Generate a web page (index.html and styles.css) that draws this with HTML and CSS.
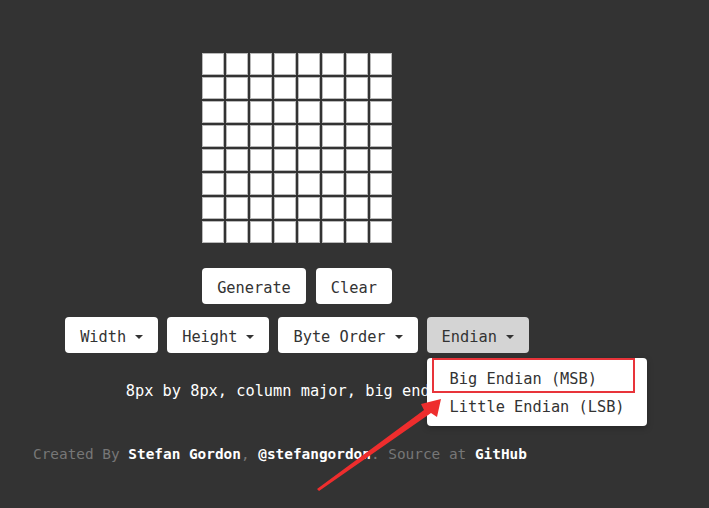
FILE: index.html
```html
<!DOCTYPE html>
<html lang="en">
<head>
<meta charset="utf-8">
<title>Bitmap Generator</title>
<link rel="stylesheet" href="styles.css">
</head>
<body>
<div class="page">
  <div class="grid">
    <span class="cell"></span><span class="cell"></span><span class="cell"></span><span class="cell"></span><span class="cell"></span><span class="cell"></span><span class="cell"></span><span class="cell"></span>
    <span class="cell"></span><span class="cell"></span><span class="cell"></span><span class="cell"></span><span class="cell"></span><span class="cell"></span><span class="cell"></span><span class="cell"></span>
    <span class="cell"></span><span class="cell"></span><span class="cell"></span><span class="cell"></span><span class="cell"></span><span class="cell"></span><span class="cell"></span><span class="cell"></span>
    <span class="cell"></span><span class="cell"></span><span class="cell"></span><span class="cell"></span><span class="cell"></span><span class="cell"></span><span class="cell"></span><span class="cell"></span>
    <span class="cell"></span><span class="cell"></span><span class="cell"></span><span class="cell"></span><span class="cell"></span><span class="cell"></span><span class="cell"></span><span class="cell"></span>
    <span class="cell"></span><span class="cell"></span><span class="cell"></span><span class="cell"></span><span class="cell"></span><span class="cell"></span><span class="cell"></span><span class="cell"></span>
    <span class="cell"></span><span class="cell"></span><span class="cell"></span><span class="cell"></span><span class="cell"></span><span class="cell"></span><span class="cell"></span><span class="cell"></span>
    <span class="cell"></span><span class="cell"></span><span class="cell"></span><span class="cell"></span><span class="cell"></span><span class="cell"></span><span class="cell"></span><span class="cell"></span>
  </div>

  <div class="row row-actions">
    <button class="btn">Generate</button>
    <button class="btn">Clear</button>
  </div>

  <div class="row row-options">
    <button class="btn">Width<span class="caret"></span></button>
    <button class="btn">Height<span class="caret"></span></button>
    <button class="btn">Byte Order<span class="caret"></span></button>
    <div class="dropdown">
      <button class="btn btn-active">Endian<span class="caret"></span></button>
      <ul class="menu">
        <li class="menu-item">Big Endian (MSB)</li>
        <li class="menu-item">Little Endian (LSB)</li>
        <span class="highlight"></span>
      </ul>
    </div>
  </div>

  <p class="status">8px by 8px, column major, big endian</p>
</div>

<p class="footer">Created By <a class="link">Stefan Gordon</a>, <a class="link">@stefangordon</a>. Source at <a class="link">GitHub</a></p>

<svg class="arrow" width="709" height="508" viewBox="0 0 709 508">
  <polygon points="317,489 424,410 421,404 441,399 437,417 431,413 319,491" fill="#ee2d2d"/>
</svg>
</body>
</html>
```

FILE: styles.css
```css
* {
  box-sizing: border-box;
}

html, body {
  margin: 0;
  padding: 0;
}

body {
  background: #333333;
  width: 709px;
  height: 508px;
  overflow: hidden;
  position: relative;
  font-family: "DejaVu Sans Mono", "Liberation Mono", monospace;
  font-size: 15.3px;
  color: #ffffff;
}

.page {
  width: 594px;
  padding-top: 52px;
  display: flex;
  flex-direction: column;
  align-items: center;
}

.grid {
  display: grid;
  grid-template-columns: repeat(8, 22px);
  grid-auto-rows: 22px;
  gap: 2px;
  padding: 1px;
}

.cell {
  display: block;
  background: #ffffff;
  border: 1px solid #b9b9b9;
}

.row {
  display: flex;
  justify-content: center;
}

.row-actions {
  margin-top: 24px;
  gap: 10px;
}

.row-options {
  margin-top: 13px;
  gap: 9px;
}

.btn {
  display: flex;
  align-items: center;
  height: 36px;
  padding: 3px 15px 0;
  border: none;
  border-radius: 4px;
  background: #ffffff;
  color: #333333;
  font-family: inherit;
  font-size: 15.3px;
  line-height: 20px;
}

.btn-active {
  background: #d4d4d4;
}

.caret {
  display: inline-block;
  width: 0;
  height: 0;
  margin-left: 9px;
  border-left: 4px solid transparent;
  border-right: 4px solid transparent;
  border-top: 4px solid #333333;
}

.dropdown {
  position: relative;
}

.menu {
  position: absolute;
  top: 41px;
  left: 0;
  width: 220px;
  margin: 0;
  padding: 7px 0 5px;
  list-style: none;
  background: #ffffff;
  border-radius: 4px;
  box-shadow: 0 2px 6px rgba(0, 0, 0, 0.25);
  z-index: 2;
}

.menu-item {
  padding-left: 23px;
  line-height: 28px;
  color: #333333;
  white-space: nowrap;
}

.highlight {
  position: absolute;
  left: 5px;
  top: 0;
  width: 203px;
  height: 35px;
  border: 2px solid #e8343a;
}

.status {
  margin: 28px 0 0;
  padding-right: 11px;
  line-height: 20px;
  white-space: nowrap;
}

.footer {
  margin: 43px 0 0;
  padding-left: 33px;
  font-size: 14.4px;
  line-height: 20px;
  color: #777777;
  white-space: nowrap;
}

.link {
  color: #ffffff;
  font-weight: bold;
}

.arrow {
  position: absolute;
  left: 0;
  top: 0;
  z-index: 3;
  pointer-events: none;
}
```
